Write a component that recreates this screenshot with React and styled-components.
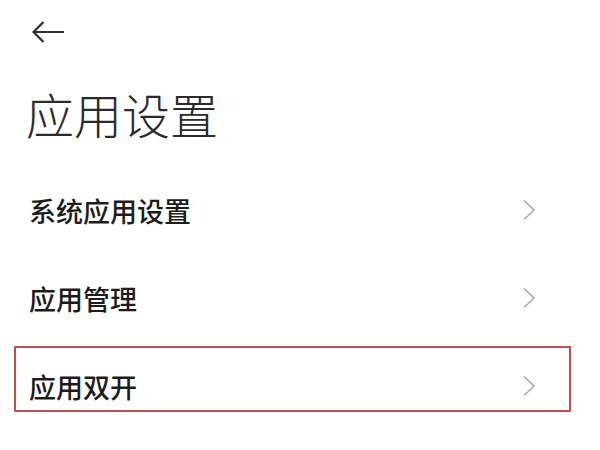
import React from 'react';
import styled, { createGlobalStyle } from 'styled-components';

const GlobalStyle = createGlobalStyle`
  html, body {
    margin: 0;
    padding: 0;
    background: #ffffff;
  }
  body {
    font-family: "Noto Sans CJK SC", "Noto Sans", sans-serif;
  }
`;

const Page = styled.div`
  width: 600px;
  height: 450px;
  background: #ffffff;
  overflow: hidden;
`;

const Header = styled.div`
  height: 64px;
  display: flex;
  align-items: center;
  padding-left: 31px;
`;

const BackBtn = styled.button`
  border: 0;
  background: none;
  padding: 0;
  display: flex;
  cursor: pointer;
`;

const Title = styled.h1`
  margin: 0;
  height: 98px;
  display: flex;
  align-items: center;
  padding-left: 26px;
  padding-bottom: 4px;
  font-size: 48px;
  font-weight: 300;
  color: #2b2b2b;
`;

const List = styled.div`
  display: flex;
  flex-direction: column;
`;

const Row = styled.div`
  position: relative;
  height: 88px;
  display: flex;
  align-items: center;
  justify-content: space-between;
  padding: 0 64px 0 29px;

  &::after {
    content: '';
    display: ${props => (props.$marked ? 'block' : 'none')};
    position: absolute;
    left: 14px;
    right: 29px;
    top: 4px;
    height: 62px;
    border: 2px solid #bf4f4c;
    border-radius: 1px;
    pointer-events: none;
  }
`;

const Label = styled.span`
  font-size: 27px;
  font-weight: 500;
  color: #1c1c1c;
`;

const Chevron = () => (
  <svg width="14" height="22" viewBox="0 0 14 22">
    <path d="M2 1.5 L12 11 L2 20.5" fill="none" stroke="#ababab" strokeWidth="1.6" />
  </svg>
);

const BackArrow = () => (
  <svg width="34" height="24" viewBox="0 0 34 24">
    <path d="M33 12 H3 M12.5 2 L2.5 12 L12.5 22" fill="none" stroke="#303030" strokeWidth="2.2" />
  </svg>
);

const items = ['系统应用设置', '应用管理', '应用双开'];

const App = () => (
  <Page>
    <GlobalStyle />
    <Header>
      <BackBtn>
        <BackArrow />
      </BackBtn>
    </Header>
    <Title>应用设置</Title>
    <List>
      {items.map((text, i) => (
        <Row key={text} $marked={i === 2}>
          <Label>{text}</Label>
          <Chevron />
        </Row>
      ))}
    </List>
  </Page>
);

export default App;
